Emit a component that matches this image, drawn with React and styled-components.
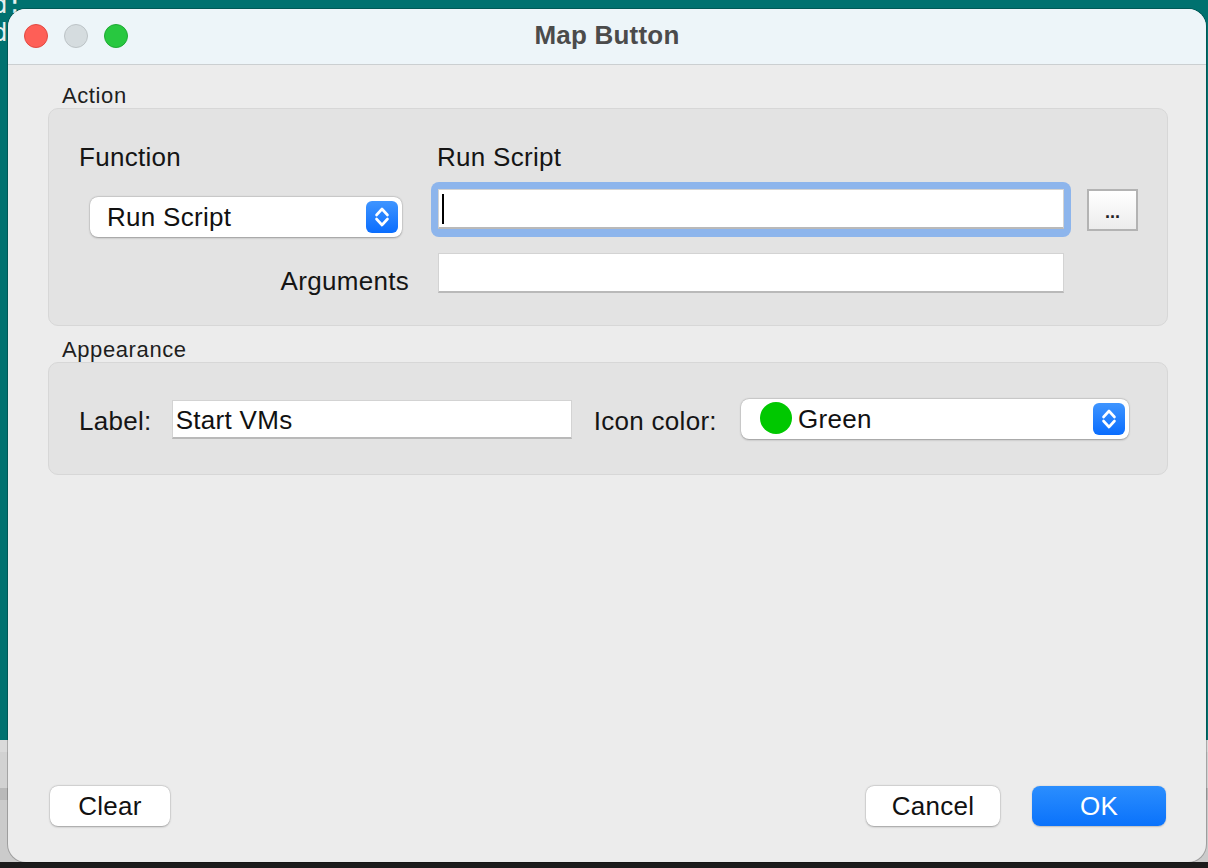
import React from "react";
import styled, { createGlobalStyle } from "styled-components";

const GlobalStyle = createGlobalStyle`
  html, body {
    margin: 0;
    padding: 0;
    background: #1c1c1c;
  }
  * {
    box-sizing: border-box;
  }
`;

const sans = `"Liberation Sans", Arial, sans-serif`;

const Desktop = styled.div`
  position: relative;
  height: 868px;
  padding: 9px 2px 6px 8px;
  display: flex;
  overflow: hidden;
  font-family: ${sans};
  background: linear-gradient(
    to bottom,
    #00716f 0 740px,
    #dadada 740px 752px,
    #d2d2d2 752px 788px,
    #b9b9b9 788px 800px,
    #cbcbcb 800px 862px,
    #1c1c1c 862px
  );
`;

const TerminalText = styled.pre`
  position: absolute;
  top: -9px;
  left: -7px;
  margin: 0;
  font-family: "DejaVu Sans Mono", monospace;
  font-size: 24px;
  line-height: 28px;
  color: #e6f0ef;
`;

const Window = styled.div`
  position: relative;
  z-index: 1;
  flex: 1;
  display: flex;
  flex-direction: column;
  background: #ececec;
  border-radius: 18px;
  overflow: hidden;
  box-shadow: 0 0 0 1px rgba(0, 0, 0, 0.22);
`;

const TitleBar = styled.header`
  height: 56px;
  flex-shrink: 0;
  display: grid;
  grid-template-columns: 1fr auto 1fr;
  align-items: center;
  padding: 0 16px 1px;
  background: #edf5f9;
  border-bottom: 1px solid #cbcfd1;
`;

const Lights = styled.div`
  display: flex;
  gap: 16px;
`;

const Light = styled.span`
  width: 24px;
  height: 24px;
  border-radius: 50%;
  background: ${(p) => p.$fill};
  border: 1px solid ${(p) => p.$edge};
`;

const Title = styled.h1`
  margin: 0 0 2px;
  font-size: 26px;
  font-weight: 700;
  color: #4b4b4b;
  letter-spacing: 0.2px;
`;

const Content = styled.main`
  flex: 1;
  display: flex;
  flex-direction: column;
  padding: 18px 38px 36px 40px;
`;

const SectionLabel = styled.div`
  font-size: 22px;
  line-height: 25px;
  padding-left: 14px;
  color: #1e1e1e;
  letter-spacing: 0.6px;
  margin-top: ${(p) => (p.$spaced ? "11px" : "0")};
`;

const Group = styled.section`
  background: #e3e3e3;
  border: 1px solid #d7d7d7;
  border-radius: 10px;
`;

const ActionGrid = styled(Group)`
  display: grid;
  grid-template-columns: 352px 640px 16px 51px;
  grid-template-rows: 50px 55px 56px;
  padding: 23px 29px 32px 30px;
`;

const FieldLabel = styled.div`
  font-size: 26px;
  line-height: 30px;
  color: #151515;
  letter-spacing: 0.3px;
  white-space: nowrap;
`;

const HeadLabel = styled(FieldLabel)`
  align-self: end;
  margin-bottom: 10px;
  padding-left: ${(p) => p.$indent || 0}px;
`;

const ArgLabel = styled(FieldLabel)`
  grid-column: 1;
  grid-row: 3;
  justify-self: end;
  align-self: end;
  margin: 0 22px -3px 0;
`;

const Select = styled.div`
  display: flex;
  align-items: center;
  height: 40px;
  width: ${(p) => p.$width}px;
  padding: 1px 4px 0 ${(p) => p.$pad}px;
  background: #fff;
  border-radius: 8px;
  box-shadow: 0 0.5px 2px rgba(0, 0, 0, 0.3), 0 0 0 0.5px rgba(0, 0, 0, 0.08);
  font-size: 26px;
  color: #111;
  letter-spacing: 0.3px;
`;

const FunctionSelect = styled(Select)`
  grid-column: 1;
  grid-row: 2;
  align-self: end;
  margin-left: 11px;
`;

const SelectText = styled.span`
  flex: 1;
`;

const Stepper = styled.span`
  width: 32px;
  height: 32px;
  margin-top: -1px;
  border-radius: 6px;
  background: linear-gradient(to bottom, #3f95ff, #0a6dfe);
  display: flex;
  align-items: center;
  justify-content: center;
`;

const Swatch = styled.span`
  width: 32px;
  height: 32px;
  margin: -3px 6px 0 0;
  border-radius: 50%;
  background: #00c800;
  flex-shrink: 0;
`;

const FocusRing = styled.div`
  grid-column: 2;
  grid-row: 2;
  padding: 7px 7px 8px;
  background: #8db5ec;
  border-radius: 8px;
`;

const TextField = styled.div`
  display: flex;
  align-items: center;
  height: ${(p) => p.$h || 40}px;
  width: ${(p) => (p.$w ? `${p.$w}px` : "auto")};
  padding: 3px 0 0 3px;
  background: #fff;
  border: 1px solid #d3d3d3;
  border-bottom: 2px solid #b9b9b9;
  font-size: 26px;
  color: #111;
  letter-spacing: 0.3px;
`;

const ArgField = styled(TextField)`
  grid-column: 2;
  grid-row: 3;
  align-self: end;
  margin: 0 7px;
`;

const Caret = styled.span`
  width: 2px;
  height: 30px;
  margin-top: -3px;
  background: #000;
`;

const DotsButton = styled.button`
  grid-column: 4;
  grid-row: 2;
  align-self: center;
  width: 51px;
  height: 42px;
  padding: 6px 0 0;
  border: 2px solid #b3b3b3;
  background: linear-gradient(to bottom, #ffffff, #ececec);
  font-family: ${sans};
  font-size: 18px;
  font-weight: 700;
  color: #222;
`;

const AppearanceRow = styled(Group)`
  display: flex;
  align-items: center;
  padding: 36px 38px 35px 30px;
`;

const RowLabel = styled(FieldLabel)`
  margin: 3px ${(p) => p.$after || 0}px 0 ${(p) => p.$before || 0}px;
`;

const ColorSelect = styled(Select)`
  margin-left: auto;
`;

const Spacer = styled.div`
  flex: 1;
`;

const Footer = styled.footer`
  display: flex;
  align-items: center;
  gap: 32px;
  padding: 0 2px;
`;

const PushButton = styled.button`
  height: 40px;
  width: ${(p) => p.$w}px;
  border: none;
  border-radius: 8px;
  font-family: ${sans};
  font-size: 26px;
  letter-spacing: 0.3px;
  color: ${(p) => (p.$primary ? "#fff" : "#111")};
  background: ${(p) =>
    p.$primary ? "linear-gradient(to bottom, #2b8efe, #0a72fb)" : "#fff"};
  box-shadow: ${(p) =>
    p.$primary
      ? "0 0.5px 1.5px rgba(0, 0, 0, 0.2)"
      : "0 0.5px 2px rgba(0, 0, 0, 0.3), 0 0 0 0.5px rgba(0, 0, 0, 0.08)"};
  margin-left: ${(p) => (p.$push ? "auto" : "0")};
`;

const Chevrons = () => (
  <svg width="32" height="32" viewBox="0 0 32 32" fill="none">
    <polyline
      points="10.5,14 16,8 21.5,14"
      stroke="#fff"
      strokeWidth="2.6"
      strokeLinecap="round"
      strokeLinejoin="round"
    />
    <polyline
      points="10.5,18 16,24 21.5,18"
      stroke="#fff"
      strokeWidth="2.6"
      strokeLinecap="round"
      strokeLinejoin="round"
    />
  </svg>
);

export default function App() {
  return (
    <>
      <GlobalStyle />
      <Desktop>
        <TerminalText>{"d:\nd"}</TerminalText>
        <Window>
          <TitleBar>
            <Lights>
              <Light $fill="#fe5f57" $edge="#e14942" />
              <Light $fill="#d5dcdf" $edge="#bcc3c6" />
              <Light $fill="#28c840" $edge="#1fa934" />
            </Lights>
            <Title>Map Button</Title>
            <span />
          </TitleBar>

          <Content>
            <SectionLabel>Action</SectionLabel>
            <ActionGrid>
              <HeadLabel>Function</HeadLabel>
              <HeadLabel $indent={6}>Run Script</HeadLabel>

              <FunctionSelect $width={312} $pad={17}>
                <SelectText>Run Script</SelectText>
                <Stepper>
                  <Chevrons />
                </Stepper>
              </FunctionSelect>

              <FocusRing>
                <TextField>
                  <Caret />
                </TextField>
              </FocusRing>

              <DotsButton>...</DotsButton>

              <ArgLabel>Arguments</ArgLabel>
              <ArgField />
            </ActionGrid>

            <SectionLabel $spaced>Appearance</SectionLabel>
            <AppearanceRow>
              <RowLabel $after={20}>Label:</RowLabel>
              <TextField $w={400} $h={39}>
                Start VMs
              </TextField>
              <RowLabel $before={22}>Icon color:</RowLabel>
              <ColorSelect $width={388} $pad={19}>
                <Swatch />
                <SelectText>Green</SelectText>
                <Stepper>
                  <Chevrons />
                </Stepper>
              </ColorSelect>
            </AppearanceRow>

            <Spacer />

            <Footer>
              <PushButton $w={120}>Clear</PushButton>
              <PushButton $w={134} $push>
                Cancel
              </PushButton>
              <PushButton $w={134} $primary>
                OK
              </PushButton>
            </Footer>
          </Content>
        </Window>
      </Desktop>
    </>
  );
}
